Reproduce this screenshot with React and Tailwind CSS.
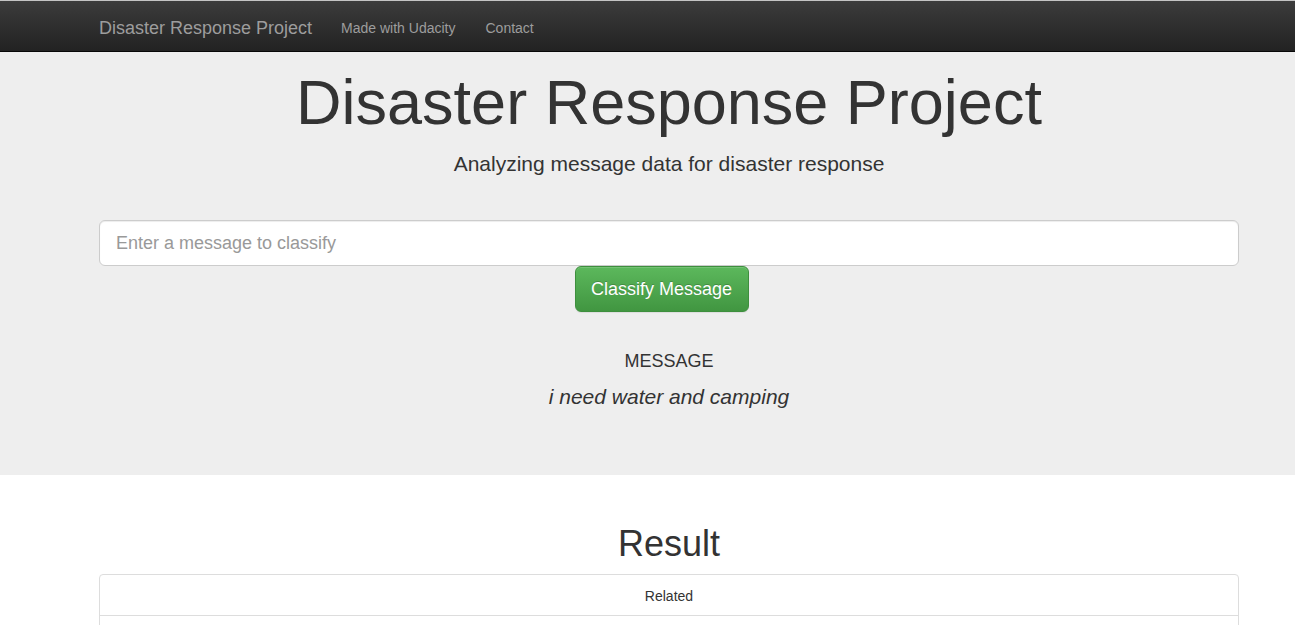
export default function App() {
  return (
    <div className="min-h-screen bg-white font-['Liberation_Sans',Arial,sans-serif] text-[#333]">

      {/* top navbar */}
      <div className="h-px bg-[#c4c4c4]" />
      <nav className="h-[51px] bg-gradient-to-b from-[#3c3c3c] to-[#222] border-b border-[#080808]">
        <div className="ml-[99px] flex items-center h-[50px] pt-[3px]">
          <span className="text-[18px] text-[#9d9d9d] leading-5">
            Disaster Response Project
          </span>
          <span className="ml-[29px] text-[14px] text-[#9d9d9d] leading-5">
            Made with Udacity
          </span>
          <span className="ml-[30px] text-[14px] text-[#9d9d9d] leading-5">
            Contact
          </span>
        </div>
      </nav>

      {/* jumbotron */}
      <div className="bg-[#eee] h-[423px]">
        <div className="ml-[99px] w-[1140px] flex flex-col items-center">

          <h1 className="mt-4 text-[63px] leading-[69px] text-[#333]">
            Disaster Response Project
          </h1>

          <p className="mt-3 text-[21px] leading-[30px] text-[#333]">
            Analyzing message data for disaster response
          </p>

          <input
            type="text"
            placeholder="Enter a message to classify"
            className="mt-[41px] w-full h-[46px] px-4 text-[18px] bg-white border border-[#ccc] rounded-md shadow-[inset_0_1px_1px_rgba(0,0,0,0.075)] placeholder:text-[#999] outline-none"
          />

          <button
            type="button"
            className="mr-[15px] w-[174px] h-[46px] text-[18px] leading-6 text-white rounded-md border border-[#3e8f3e] bg-gradient-to-b from-[#5cb85c] to-[#419641] shadow-[inset_0_1px_0_rgba(255,255,255,0.15),0_1px_1px_rgba(0,0,0,0.075)] [text-shadow:0_-1px_0_rgba(0,0,0,0.2)]"
          >
            Classify Message
          </button>

          <p className="mt-[36px] text-[18px] leading-[26px] text-[#333]">
            MESSAGE
          </p>

          <p className="mt-[9px] text-[21px] leading-7 italic text-[#333]">
            i need water and camping
          </p>

        </div>
      </div>

      {/* result */}
      <div className="ml-[99px] w-[1140px] flex flex-col items-center">

        <h2 className="mt-[49px] text-[36px] leading-[40px] text-[#333]">
          Result
        </h2>

        <div className="mt-[10px] w-full border border-[#ddd] rounded-t">
          <div className="h-[41px] pt-[3px] flex items-center justify-center text-[14px] text-[#333] border-b border-[#ddd]">
            Related
          </div>
          <div className="h-10" />
        </div>

      </div>

    </div>
  );
}
